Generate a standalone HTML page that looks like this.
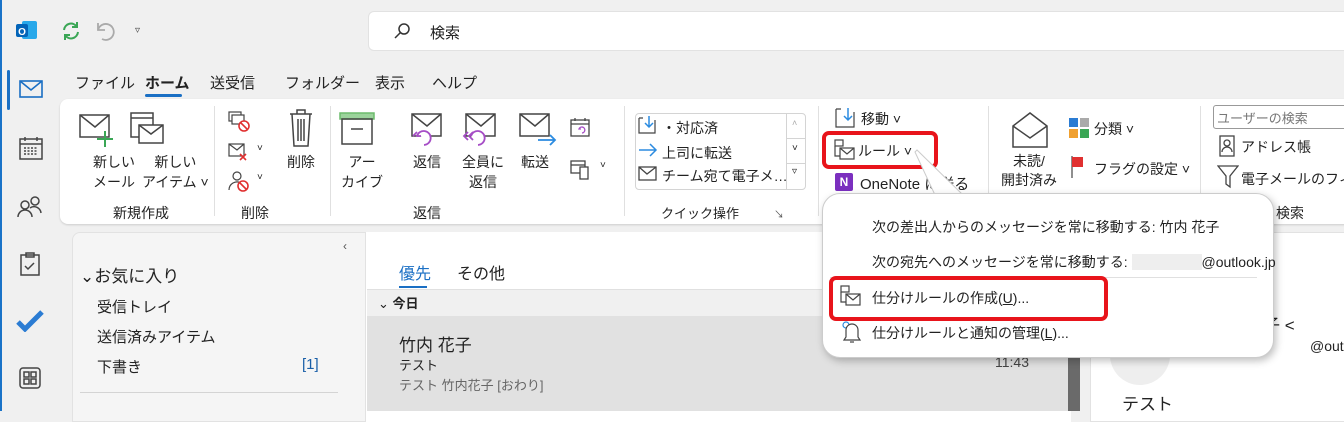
<!DOCTYPE html>
<html><head><meta charset="utf-8"><style>
*{margin:0;padding:0;box-sizing:border-box}
body{width:1344px;height:411px;overflow:hidden;background:#f0f0f0;font-family:"Liberation Sans","Noto Sans CJK JP",sans-serif;color:#222;position:relative;font-size:14px}
.a{position:absolute;white-space:nowrap}
.sep{position:absolute;width:1px;background:#e0e0e0}
.red{position:absolute;border:4px solid #e8141b;border-radius:7px}
</style></head><body>
<div class="a" style="left:0;top:0;width:2px;height:411px;background:#1a73c8"></div>
<svg class="a" style="left:16px;top:20px" width="22" height="22"><rect x="6" y="1" width="15" height="18" rx="2" fill="#28a8ea"/><rect x="0" y="4" width="12" height="13" rx="2" fill="#0364b8"/><text x="6" y="15" font-size="10" fill="#fff" text-anchor="middle" font-weight="bold" font-family="Liberation Sans">O</text></svg>
<svg class="a" style="left:60px;top:20px" width="22" height="22" fill="none" stroke="#3aa655" stroke-width="2"><path d="M4 10a7 7 0 0 1 13-3M18 12a7 7 0 0 1-13 3"/><path d="M17 2v5h-5M5 20v-5h5"/></svg>
<svg class="a" style="left:94px;top:20px" width="22" height="22" fill="none" stroke="#aaa" stroke-width="1.8"><path d="M4 3v7h7"/><path d="M4 10a8 8 0 1 1 4 9"/></svg>
<div class="a" style="left:135px;top:25px;font-size:10px;color:#444">▿</div>
<div class="a" style="left:368px;top:11px;width:990px;height:40px;background:#fff;border-radius:6px;border:1px solid #e2e2e2"></div>
<svg class="a" style="left:393px;top:22px" width="18" height="18" fill="none" stroke="#333" stroke-width="1.5"><circle cx="11" cy="7" r="5"/><path d="M7.5 10.5L2 16"/></svg>
<div class="a" style="left:430px;top:22px;font-size:15px">検索</div>
<div class="a" style="left:7px;top:70px;width:3px;height:40px;background:#1a6fc4;border-radius:2px"></div>
<svg class="a" style="left:19px;top:80px" width="24" height="18" fill="none" stroke="#1a6fc4" stroke-width="1.6"><rect x="1" y="1" width="22" height="16"/><path d="M1 1l11 9 11-9"/></svg>
<svg class="a" style="left:19px;top:136px" width="24" height="24" fill="none" stroke="#444" stroke-width="1.5"><rect x="1" y="3" width="22" height="20"/><path d="M1 8h22M6 1v4M18 1v4"/><path d="M5 12h14M5 15h14M5 18h14" stroke-dasharray="2 1.5"/></svg>
<svg class="a" style="left:17px;top:195px" width="26" height="24" fill="none" stroke="#444" stroke-width="1.5"><circle cx="8" cy="10" r="4"/><circle cx="18" cy="6" r="4"/><path d="M1 22a7 7 0 0 1 14 0M13 13a7 7 0 0 1 11 5"/></svg>
<svg class="a" style="left:20px;top:252px" width="20" height="24" fill="none" stroke="#444" stroke-width="1.5"><rect x="1" y="3" width="18" height="20"/><rect x="6" y="1" width="8" height="4"/><path d="M5 14l3 3 6-6"/></svg>
<svg class="a" style="left:16px;top:310px" width="28" height="22"><path d="M2 12l7 7L26 2" fill="none" stroke="#2b7cd3" stroke-width="5"/></svg>
<svg class="a" style="left:19px;top:367px" width="22" height="22" fill="none" stroke="#444" stroke-width="1.5"><rect x="1" y="1" width="20" height="20" rx="3"/><rect x="5" y="5" width="5" height="5"/><rect x="12" y="5" width="5" height="5"/><rect x="5" y="12" width="5" height="5"/><rect x="12" y="12" width="5" height="5"/></svg>
<div class="a" style="left:75px;top:72px;font-size:15px">ファイル</div>
<div class="a" style="left:145px;top:72px;font-size:15px;font-weight:bold">ホーム</div>
<div class="a" style="left:145px;top:94px;width:37px;height:3px;background:#1a6fc4;border-radius:2px"></div>
<div class="a" style="left:210px;top:72px;font-size:15px">送受信</div>
<div class="a" style="left:285px;top:72px;font-size:15px">フォルダー</div>
<div class="a" style="left:375px;top:72px;font-size:15px">表示</div>
<div class="a" style="left:432px;top:72px;font-size:15px">ヘルプ</div>
<div class="a" style="left:60px;top:99px;width:1300px;height:125px;background:#fff;border-radius:8px;box-shadow:0 1px 2px rgba(0,0,0,.15)"></div>
<div class="sep" style="left:214px;top:106px;height:110px"></div>
<div class="sep" style="left:330px;top:106px;height:110px"></div>
<div class="sep" style="left:624px;top:106px;height:110px"></div>
<div class="sep" style="left:818px;top:106px;height:110px"></div>
<div class="sep" style="left:988px;top:106px;height:110px"></div>
<div class="sep" style="left:1200px;top:106px;height:110px"></div>
<svg class="a" style="left:79px;top:113px" width="34" height="34" fill="none" stroke="#444" stroke-width="1.5"><rect x="1" y="2" width="29" height="22"/><path d="M1 2l15 12 14-12"/><path d="M26 18v16M18 26h16" stroke="#3aa655" stroke-width="2"/></svg>
<svg class="a" style="left:130px;top:110px" width="34" height="38" fill="none" stroke="#444" stroke-width="1.5"><rect x="1" y="3" width="22" height="24"/><path d="M1 8h22"/><rect x="9" y="15" width="24" height="18" fill="#fff"/><path d="M9 15l12 9 12-9"/></svg>
<div class="a" style="left:93px;top:152px;font-size:14px;text-align:center;line-height:20px">新しい<br>メール</div>
<div class="a" style="left:142px;top:152px;font-size:14px;text-align:center;line-height:20px">新しい<br>アイテム ˅</div>
<div class="a" style="left:113px;top:203px;font-size:14px">新規作成</div>
<svg class="a" style="left:228px;top:111px" width="24" height="22" fill="none" stroke="#444" stroke-width="1.2"><rect x="1" y="1" width="12" height="9"/><rect x="4" y="4" width="12" height="9" fill="#fff"/><circle cx="16" cy="15" r="5" stroke="#e03030" stroke-width="1.6" fill="#fff"/><path d="M13 12l6 6" stroke="#e03030" stroke-width="1.6"/></svg>
<svg class="a" style="left:228px;top:141px" width="24" height="22" fill="none" stroke="#444" stroke-width="1.2"><rect x="1" y="3" width="15" height="12"/><path d="M1 3l8 6 7-6"/><path d="M12 13l6 6M18 13l-6 6" stroke="#e03030" stroke-width="1.6"/></svg>
<div class="a" style="left:257px;top:143px;font-size:10px">˅</div>
<svg class="a" style="left:228px;top:170px" width="24" height="24" fill="none" stroke="#444" stroke-width="1.2"><circle cx="9" cy="6" r="4"/><path d="M1 20a8 8 0 0 1 12-7"/><circle cx="15" cy="16" r="5" stroke="#e03030" stroke-width="1.6" fill="#fff"/><path d="M12 13l6 6" stroke="#e03030" stroke-width="1.6"/></svg>
<div class="a" style="left:257px;top:172px;font-size:10px">˅</div>
<svg class="a" style="left:288px;top:108px" width="26" height="40" fill="none" stroke="#444" stroke-width="1.5"><path d="M2 6h22M9 6V2h8v4M4 6l2 32h14l2-32M10 11v22M13 11v22M16 11v22"/></svg>
<div class="a" style="left:287px;top:152px;font-size:14px">削除</div>
<svg class="a" style="left:338px;top:111px" width="38" height="34" fill="none" stroke="#444" stroke-width="1.5"><rect x="2" y="2" width="34" height="6" fill="#9bd39b" stroke="#6cbb6c"/><rect x="4" y="8" width="30" height="25"/><path d="M13 18h12"/></svg>
<div class="a" style="left:341px;top:152px;font-size:14px;text-align:center;line-height:20px">アー<br>カイブ</div>
<div class="a" style="left:255px;top:203px;font-size:14px;transform:translateX(-50%)">削除</div>
<svg class="a" style="left:410px;top:112px" width="36" height="34" fill="none" stroke="#444" stroke-width="1.5"><rect x="2" y="2" width="29" height="22"/><path d="M2 2l15 12 14-12"/><path d="M14 33a7 7 0 1 0-7-9h4" stroke="#a64dc6" stroke-width="1.8" fill="#fff"/><path d="M3 24l4-4" stroke="#a64dc6" stroke-width="1.8"/></svg>
<svg class="a" style="left:462px;top:112px" width="36" height="34" fill="none" stroke="#444" stroke-width="1.5"><rect x="4" y="2" width="29" height="22"/><path d="M4 2l15 12 14-12"/><g stroke="#a64dc6" stroke-width="1.8"><path d="M16 33a7 7 0 1 0-7-9" fill="#fff"/><path d="M6 20l-4 4 4 4M11 20l-4 4 4 4"/></g></svg>
<svg class="a" style="left:518px;top:112px" width="40" height="34" fill="none" stroke="#444" stroke-width="1.5"><rect x="2" y="2" width="29" height="22"/><path d="M2 2l15 12 14-12"/><path d="M20 28h17M32 23l5 5-5 5" stroke="#2b8be0" stroke-width="1.8"/></svg>
<svg class="a" style="left:570px;top:117px" width="22" height="22" fill="none" stroke="#444" stroke-width="1.3"><rect x="1" y="3" width="18" height="16"/><path d="M1 7h18M5 1v3M15 1v3"/><path d="M12 16a3 3 0 1 0-3-4h2" stroke="#a64dc6"/></svg>
<svg class="a" style="left:570px;top:158px" width="22" height="22" fill="none" stroke="#444" stroke-width="1.3"><rect x="1" y="3" width="14" height="12"/><path d="M1 7h14"/><rect x="10" y="9" width="8" height="12" fill="#fff"/></svg>
<div class="a" style="left:600px;top:160px;font-size:10px">˅</div>
<div class="a" style="left:413px;top:152px;font-size:14px">返信</div>
<div class="a" style="left:462px;top:152px;font-size:14px;text-align:center;line-height:20px">全員に<br>返信</div>
<div class="a" style="left:521px;top:152px;font-size:14px">転送</div>
<div class="a" style="left:413px;top:203px;font-size:14px">返信</div>
<div class="a" style="left:635px;top:113px;width:171px;height:77px;border:1px solid #d4d4d4;border-radius:4px"></div>
<div class="a" style="left:786px;top:113px;width:1px;height:77px;background:#d4d4d4"></div>
<div class="a" style="left:786px;top:138px;width:20px;height:1px;background:#d4d4d4"></div>
<div class="a" style="left:786px;top:163px;width:20px;height:1px;background:#d4d4d4"></div>
<div class="a" style="left:792px;top:118px;font-size:9px;color:#aaa">˄</div>
<div class="a" style="left:792px;top:143px;font-size:10px">˅</div>
<div class="a" style="left:792px;top:166px;font-size:10px">▿</div>
<svg class="a" style="left:638px;top:115px" width="20" height="20" fill="none" stroke="#444" stroke-width="1.2"><path d="M1 3h4M1 3v15h16V5"/><path d="M11 1v11M7 8l4 4 4-4" stroke="#2b8be0" stroke-width="1.5"/></svg>
<div class="a" style="left:662px;top:118px;font-size:14px">・対応済</div>
<svg class="a" style="left:638px;top:142px" width="20" height="16" fill="none" stroke="#2b8be0" stroke-width="1.5"><path d="M1 8h17M12 2l6 6-6 6"/></svg>
<div class="a" style="left:662px;top:143px;font-size:14px">上司に転送</div>
<svg class="a" style="left:638px;top:166px" width="20" height="16" fill="none" stroke="#444" stroke-width="1.3"><rect x="1" y="1" width="17" height="13"/><path d="M1 1l8 7 9-7"/></svg>
<div class="a" style="left:662px;top:166px;font-size:14px">チーム宛て電子メ…</div>
<div class="a" style="left:661px;top:203px;font-size:13px">クイック操作</div>
<div class="a" style="left:774px;top:206px;font-size:10px;color:#555">↘</div>
<svg class="a" style="left:835px;top:107px" width="22" height="22" fill="none" stroke="#444" stroke-width="1.2"><path d="M1 2h5M1 2v18h18V5"/><path d="M13 1v12M9 9l4 4 4-4" stroke="#2b8be0" stroke-width="1.5"/></svg>
<div class="a" style="left:861px;top:109px;font-size:14px">移動 ˅</div>
<svg class="a" style="left:834px;top:139px" width="22" height="22" fill="none" stroke="#444" stroke-width="1.2"><rect x="1" y="1" width="8" height="6"/><path d="M1 7v10h5"/><rect x="6" y="9" width="14" height="11" fill="#fff"/><path d="M6 9l7 6 7-6"/></svg>
<div class="a" style="left:858px;top:141px;font-size:14px">ルール ˅</div>
<div class="a" style="left:835px;top:173px;width:18px;height:18px;background:#7b2fbf;color:#fff;font-size:12px;font-weight:bold;text-align:center;line-height:18px;border-radius:2px">N</div>
<div class="a" style="left:860px;top:173px;font-size:15px">OneNote に送る</div>
<div class="red" style="left:822px;top:131px;width:116px;height:38px"></div>
<svg class="a" style="left:1010px;top:110px" width="40" height="40" fill="none" stroke="#444" stroke-width="1.5"><path d="M3 16L20 3l17 13v21H3z"/><path d="M3 16l17 12 17-12"/></svg>
<div class="a" style="left:1001px;top:152px;font-size:14px;text-align:center;line-height:19px">未読/<br>開封済み</div>
<svg class="a" style="left:1068px;top:117px" width="22" height="22"><rect x="1" y="1" width="9" height="9" fill="#2b7cd3"/><rect x="12" y="1" width="9" height="9" fill="#aaa"/><rect x="1" y="12" width="9" height="9" fill="#f0a030"/><rect x="12" y="12" width="9" height="9" fill="#3aa655"/></svg>
<div class="a" style="left:1094px;top:119px;font-size:14px">分類 ˅</div>
<svg class="a" style="left:1070px;top:155px" width="16" height="24"><path d="M2 1v22" stroke="#444" stroke-width="1.2"/><path d="M2 2h11v10H2" fill="#e03030"/></svg>
<div class="a" style="left:1094px;top:159px;font-size:14px">フラグの設定 ˅</div>
<div class="a" style="left:1213px;top:105px;width:140px;height:24px;border:1px solid #999;border-radius:3px;background:#fff"></div>
<div class="a" style="left:1217px;top:108px;font-size:13px;color:#777">ユーザーの検索</div>
<svg class="a" style="left:1219px;top:135px" width="16" height="22" fill="none" stroke="#444" stroke-width="1.3"><rect x="1" y="1" width="14" height="20"/><circle cx="8" cy="8" r="3"/><path d="M3 17a5 5 0 0 1 10 0"/></svg>
<div class="a" style="left:1241px;top:137px;font-size:14px">アドレス帳</div>
<svg class="a" style="left:1217px;top:165px" width="22" height="24" fill="none" stroke="#444" stroke-width="1.3"><path d="M1 1h20l-8 10v11l-4-3v-8z"/></svg>
<div class="a" style="left:1241px;top:169px;font-size:14px">電子メールのフィルター</div>
<div class="a" style="left:1276px;top:203px;font-size:14px">検索</div>
<div class="a" style="left:72px;top:232px;width:294px;height:190px;background:#f5f5f5;border-radius:8px 0 0 0;border:1px solid #e2e2e2"></div>
<div class="a" style="left:343px;top:239px;font-size:12px;color:#555">‹</div>
<div class="a" style="left:80px;top:262px;font-size:17px">⌄お気に入り</div>
<div class="a" style="left:97px;top:296px;font-size:15px">受信トレイ</div>
<div class="a" style="left:97px;top:326px;font-size:15px">送信済みアイテム</div>
<div class="a" style="left:97px;top:356px;font-size:15px">下書き</div>
<div class="a" style="left:302px;top:356px;font-size:15px;color:#1a5fa8">[1]</div>
<div class="a" style="left:80px;top:392px;width:258px;height:1px;background:#d4d4d4"></div>
<div class="a" style="left:366px;top:232px;width:705px;height:190px;background:#fff"></div>
<div class="a" style="left:399px;top:260px;font-size:16px;color:#1a6fc4">優先</div>
<div class="a" style="left:399px;top:286px;width:28px;height:2px;background:#1a6fc4"></div>
<div class="a" style="left:457px;top:260px;font-size:16px">その他</div>
<div class="a" style="left:367px;top:289px;width:704px;height:27px;background:#f0f0f0;border-top:1px solid #e0e0e0"></div>
<div class="a" style="left:378px;top:293px;font-size:13px">⌄ <b>今日</b></div>
<div class="a" style="left:367px;top:316px;width:704px;height:95px;background:#e1e1e1"></div>
<div class="a" style="left:399px;top:331px;font-size:17px">竹内 花子</div>
<div class="a" style="left:399px;top:355px;font-size:13px">テスト</div>
<div class="a" style="left:399px;top:375px;font-size:13px;color:#666">テスト 竹内花子 [おわり]</div>
<div class="a" style="left:995px;top:354px;font-size:14px;color:#444">11:43</div>
<div class="a" style="left:1068px;top:232px;width:12px;height:179px;background:#6a6a6a"></div>
<div class="a" style="left:1090px;top:232px;width:260px;height:190px;background:#fff;border:1px solid #e2e2e2"></div>
<div class="a" style="left:1110px;top:325px;width:60px;height:60px;border-radius:50%;background:#eee"></div>
<div class="a" style="left:1263px;top:311px;font-size:17px">子 &lt;</div>
<div class="a" style="left:1310px;top:338px;font-size:14px">@outl</div>
<div class="a" style="left:1122px;top:390px;font-size:17px">テスト</div>
<svg class="a" style="left:905px;top:148px" width="60" height="50"><path d="M10 4L30 47h28L12 2z" fill="#fff" stroke="#ccc"/></svg>
<div class="a" style="left:822px;top:193px;width:452px;height:165px;background:#fff;border-radius:18px;border:1px solid #ccc;box-shadow:2px 3px 8px rgba(0,0,0,.25)"></div>
<div class="a" style="left:872px;top:217px;font-size:14px">次の差出人からのメッセージを常に移動する: 竹内 花子</div>
<div class="a" style="left:872px;top:252px;font-size:14px">次の宛先へのメッセージを常に移動する: <span style="background:#eee;color:#eee">xxxxxxxxxx</span>@outlook.jp</div>
<div class="a" style="left:830px;top:277px;width:427px;height:1px;background:#e0e0e0"></div>
<svg class="a" style="left:840px;top:285px" width="22" height="22" fill="none" stroke="#444" stroke-width="1.2"><rect x="1" y="1" width="8" height="6"/><path d="M1 7v10h5"/><rect x="6" y="9" width="14" height="11" fill="#fff"/><path d="M6 9l7 6 7-6"/></svg>
<div class="a" style="left:872px;top:288px;font-size:14px">仕分けルールの作成(<u>U</u>)...</div>
<div class="red" style="left:829px;top:276px;width:279px;height:45px"></div>
<svg class="a" style="left:840px;top:320px" width="22" height="24" fill="none" stroke="#444" stroke-width="1.2"><circle cx="6" cy="5" r="3" stroke="#2b8be0"/><path d="M6 10a6 6 0 0 1 12 0v7l2 3H4l2-3z" fill="#fff"/><path d="M10 22h4"/></svg>
<div class="a" style="left:872px;top:323px;font-size:14px">仕分けルールと通知の管理(<u>L</u>)...</div>
</body></html>
